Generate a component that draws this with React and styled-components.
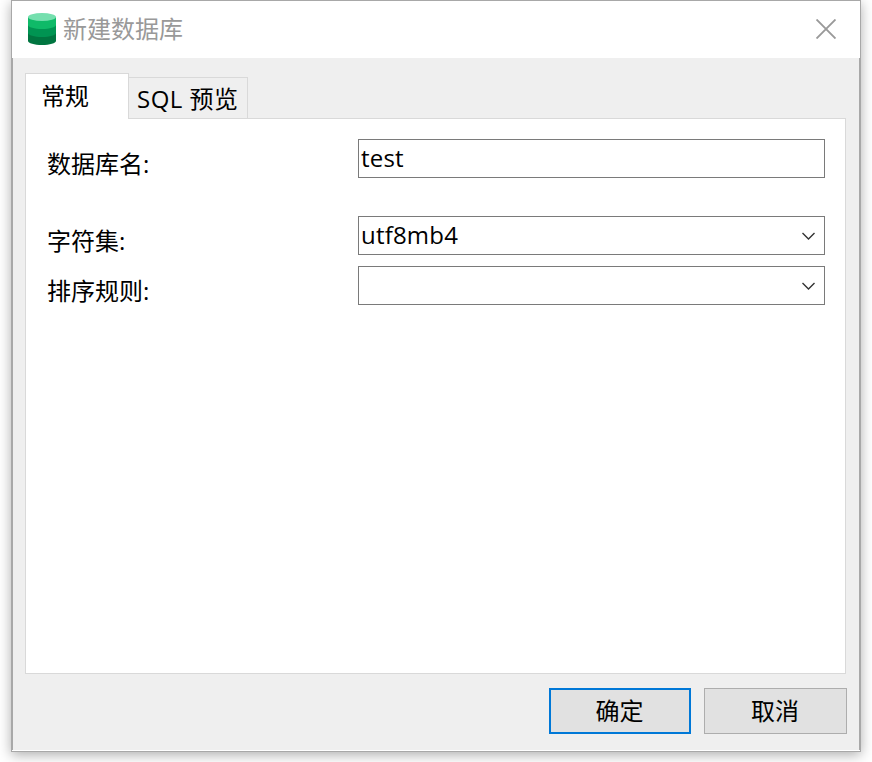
import React from 'react'
import styled, { createGlobalStyle } from 'styled-components'

const GlobalStyle = createGlobalStyle`
  * {
    box-sizing: border-box;
  }

  body {
    min-height: 100vh;
    margin: 0;
    background: #fff;
    color: #000;
    font-family: 'Open Sans', 'Noto Sans CJK SC', sans-serif;
    font-size: 24px;
    line-height: 34px;
    overflow: hidden;
  }
`

const Dialog = styled.div`
  display: flex;
  flex-direction: column;
  width: 850px;
  height: 752px;
  margin-left: 11px;
  border: 1px solid #a8a8a8;
  background: #fff;
  box-shadow: 0 3px 12px rgba(0, 0, 0, 0.32);
`

const TitleBar = styled.header`
  display: flex;
  align-items: center;
  height: 57px;
  padding: 0 24px 1px 16px;
`

const Title = styled.h1`
  flex: 1;
  margin: 0 0 0 7px;
  color: #999;
  font-size: 24px;
  font-weight: 400;
`

const Close = styled.button`
  display: flex;
  padding: 0;
  border: 0;
  background: none;
`

const Body = styled.main`
  display: flex;
  flex: 1;
  flex-direction: column;
  margin-bottom: 1px;
  padding: 15px 12px 16px;
  border: solid #a8a8a8;
  border-width: 0 1px;
  background: #efefef;
`

const Tabs = styled.nav`
  display: flex;
  align-items: flex-end;
  height: 45px;
`

const Tab = styled.div`
  width: ${props => (props.$active ? '104px' : '119px')};
  height: ${props => (props.$active ? '46px' : '41px')};
  padding: ${props => (props.$active ? '5px 0 0 15px' : '4px 0 0 8px')};
  border: 1px solid #d9d9d9;
  border-bottom: 0;
  border-left-width: ${props => (props.$active ? '1px' : '0')};
  margin-bottom: ${props => (props.$active ? '-1px' : '0')};
  background: ${props => (props.$active ? '#fff' : '#efefef')};
  letter-spacing: ${props => (props.$active ? '0' : '0.5px')};
  white-space: nowrap;
  z-index: ${props => (props.$active ? 1 : 0)};
`

const Panel = styled.section`
  width: 821px;
  height: 556px;
  padding: 20px 20px 0 21px;
  border: 1px solid #d9d9d9;
  background: #fff;
`

const Row = styled.div`
  display: flex;
  height: 39px;
  margin-bottom: ${props => props.$gap || 0}px;
`

const Label = styled.label`
  width: 311px;
  padding-top: 8px;
`

const Field = styled.div`
  display: flex;
  align-items: center;
  justify-content: space-between;
  width: 467px;
  padding: 0 9px 0 2px;
  border: 1px solid #7a7a7a;
  background: #fff;
`

const Value = styled.span`
  padding-bottom: 2px;
  letter-spacing: 0.2px;
`

const Footer = styled.footer`
  display: flex;
  justify-content: flex-end;
  gap: 13px;
  margin-top: 14px;
`

const Button = styled.button`
  width: ${props => (props.$primary ? '142px' : '143px')};
  height: 46px;
  padding: 0 1px 0 0;
  border: ${props => (props.$primary ? '2px solid #0078d7' : '1px solid #adadad')};
  background: #e1e1e1;
  color: #000;
  font: inherit;
`

const DatabaseIcon = () => (
  <svg width="28" height="32" viewBox="0 0 28 32">
    <path d="M0 20h28v8c0 2.2-6.3 4-14 4S0 30.2 0 28z" fill="#007540" />
    <path d="M0 12h28v8c0 2.2-6.3 4-14 4S0 22.2 0 20z" fill="#009452" />
    <path d="M0 4h28v8c0 2.2-6.3 4-14 4S0 14.2 0 12z" fill="#0fba68" />
    <ellipse cx="14" cy="4" rx="14" ry="4" fill="#75dfae" />
  </svg>
)

const Chevron = () => (
  <svg width="13" height="8" viewBox="0 0 13 8">
    <path d="m.5 1 6 6 6-6" fill="none" stroke="#333" strokeWidth="1.4" />
  </svg>
)

const App = () => (
  <>
    <GlobalStyle />
    <Dialog>
      <TitleBar>
        <DatabaseIcon />
        <Title>新建数据库</Title>
        <Close aria-label="关闭">
          <svg width="20" height="20" viewBox="0 0 20 20">
            <path d="m.5.5 19 19m0-19-19 19" stroke="#999" strokeWidth="1.9" />
          </svg>
        </Close>
      </TitleBar>
      <Body>
        <Tabs>
          <Tab $active>常规</Tab>
          <Tab>SQL 预览</Tab>
        </Tabs>
        <Panel>
          <Row $gap={38}>
            <Label>数据库名:</Label>
            <Field>
              <Value>test</Value>
            </Field>
          </Row>
          <Row $gap={11}>
            <Label>字符集:</Label>
            <Field>
              <Value>utf8mb4</Value>
              <Chevron />
            </Field>
          </Row>
          <Row>
            <Label>排序规则:</Label>
            <Field>
              <Value />
              <Chevron />
            </Field>
          </Row>
        </Panel>
        <Footer>
          <Button $primary>确定</Button>
          <Button>取消</Button>
        </Footer>
      </Body>
    </Dialog>
  </>
)

export default App
